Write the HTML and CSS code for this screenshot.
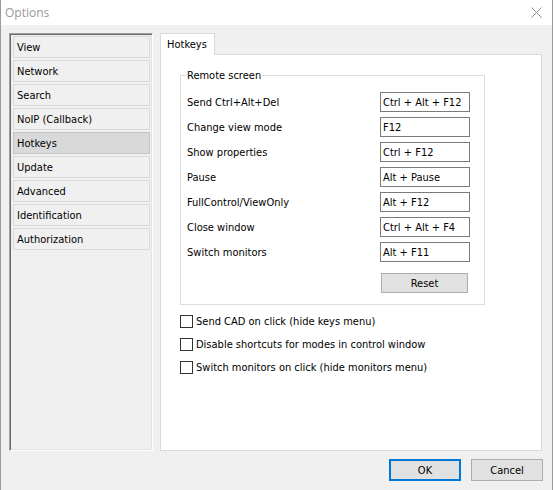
FILE: index.html
```html
<!DOCTYPE html>
<html lang="en">
<head>
    <meta charset="UTF-8">
    <title>Options</title>
    <link rel="stylesheet" href="styles.css">
</head>
<body>
    <div class="window">
        <div class="titlebar">
            <span class="title">Options</span>
            <span class="close">
                <svg width="11" height="11" viewBox="0 0 11 11">
                    <path d="M0.5 0.5 L10.5 10.5 M10.5 0.5 L0.5 10.5" stroke="#8a8a8a" stroke-width="1" fill="none"/>
                </svg>
            </span>
        </div>

        <div class="content">
            <div class="nav">
                <div class="nav-item">View</div>
                <div class="nav-item">Network</div>
                <div class="nav-item">Search</div>
                <div class="nav-item">NoIP (Callback)</div>
                <div class="nav-item active">Hotkeys</div>
                <div class="nav-item">Update</div>
                <div class="nav-item">Advanced</div>
                <div class="nav-item">Identification</div>
                <div class="nav-item">Authorization</div>
            </div>

            <div class="tabs">
                <div class="tab-strip">
                    <div class="tab active">Hotkeys</div>
                </div>
                <div class="tab-panel">
                    <div class="group">
                        <span class="group-title">Remote screen</span>
                        <div class="hk-row">
                            <span>Send Ctrl+Alt+Del</span>
                            <div class="hk-input">Ctrl + Alt + F12</div>
                        </div>
                        <div class="hk-row">
                            <span>Change view mode</span>
                            <div class="hk-input">F12</div>
                        </div>
                        <div class="hk-row">
                            <span>Show properties</span>
                            <div class="hk-input">Ctrl + F12</div>
                        </div>
                        <div class="hk-row">
                            <span>Pause</span>
                            <div class="hk-input">Alt + Pause</div>
                        </div>
                        <div class="hk-row">
                            <span>FullControl/ViewOnly</span>
                            <div class="hk-input">Alt + F12</div>
                        </div>
                        <div class="hk-row">
                            <span>Close window</span>
                            <div class="hk-input">Ctrl + Alt + F4</div>
                        </div>
                        <div class="hk-row">
                            <span>Switch monitors</span>
                            <div class="hk-input">Alt + F11</div>
                        </div>
                        <div class="reset-row">
                            <button class="btn reset-btn">Reset</button>
                        </div>
                    </div>

                    <div class="checks">
                        <label class="check-row"><span class="box"></span>Send CAD on click (hide keys menu)</label>
                        <label class="check-row"><span class="box"></span>Disable shortcuts for modes in control window</label>
                        <label class="check-row"><span class="box"></span>Switch monitors on click (hide monitors menu)</label>
                    </div>
                </div>
            </div>
        </div>

        <div class="footer">
            <button class="btn ok-btn">OK</button>
            <button class="btn">Cancel</button>
        </div>
    </div>
</body>
</html>
```

FILE: styles.css
```css
* {
    margin: 0;
    padding: 0;
    box-sizing: border-box;
}

body {
    font-family: 'DejaVu Sans Condensed', 'Liberation Sans', Arial, sans-serif;
    font-size: 11px;
    color: #000;
    background: #f0f0f0;
}

.window {
    width: 553px;
    height: 490px;
    border-left: 1px solid #9a9a9a;
    border-right: 1px solid #9a9a9a;
    background: #f0f0f0;
    display: flex;
    flex-direction: column;
}

.titlebar {
    height: 25px;
    background: #fff;
    display: flex;
    align-items: center;
    justify-content: space-between;
    padding: 0 10px 0 4px;
}

.title {
    font-family: 'Open Sans', 'Noto Sans', sans-serif;
    font-size: 12px;
    color: #999;
}

.close {
    display: flex;
}

.content {
    display: flex;
    padding: 8px 0 0 8px;
    height: 426px;
}

.nav {
    width: 144px;
    height: 418px;
    border-top: 1px solid #a0a0a0;
    border-left: 1px solid #a0a0a0;
    border-right: 1px solid #fff;
    border-bottom: 1px solid #fff;
    box-shadow: inset 1px 1px 0 #696969, inset -1px -1px 0 #e3e3e3;
    padding: 2px 2px 0 3px;
    display: flex;
    flex-direction: column;
    gap: 2px;
}

.nav-item {
    height: 22px;
    border: 1px solid #d9d9d9;
    background: #f0f0f0;
    padding-left: 3px;
    display: flex;
    align-items: center;
    cursor: pointer;
}

.nav-item.active {
    background: #d9d9d9;
    border-color: #c4c4c4;
}

.tabs {
    margin-left: 7px;
    width: 382px;
    display: flex;
    flex-direction: column;
}

.tab-strip {
    display: flex;
    height: 22px;
    margin-bottom: -1px;
    position: relative;
    z-index: 1;
}

.tab {
    width: 55px;
    height: 22px;
    background: #fff;
    border: 1px solid #d9d9d9;
    border-bottom: none;
    padding-left: 6px;
    display: flex;
    align-items: center;
}

.tab-panel {
    height: 397px;
    background: #fff;
    border: 1px solid #d9d9d9;
    padding: 20px 0 0 19px;
}

.group {
    position: relative;
    width: 305px;
    border: 1px solid #dcdcdc;
    padding: 16px 14px 11px 6px;
    display: flex;
    flex-direction: column;
    gap: 5px;
}

.group-title {
    position: absolute;
    top: -8px;
    left: 6px;
    background: #fff;
    padding-right: 1px;
    line-height: 15px;
}

.hk-row {
    height: 20px;
    display: flex;
    align-items: center;
    justify-content: space-between;
}

.hk-input {
    width: 90px;
    height: 20px;
    border: 1px solid #7a7a7a;
    padding-left: 2px;
    display: flex;
    align-items: center;
}

.reset-row {
    display: flex;
    justify-content: flex-end;
    margin-top: 6px;
    padding-right: 2px;
}

.btn {
    font-family: inherit;
    font-size: 11px;
    color: #000;
    background: #e1e1e1;
    border: 1px solid #adadad;
    width: 72px;
    height: 22px;
    cursor: pointer;
}

.reset-btn {
    width: 87px;
    height: 20px;
}

.ok-btn {
    border: 2px solid #0078d7;
}

.checks {
    margin-top: 5px;
    display: flex;
    flex-direction: column;
}

.check-row {
    height: 23px;
    display: flex;
    align-items: center;
}

.box {
    width: 13px;
    height: 13px;
    border: 1px solid #333;
    background: #fff;
    margin-right: 3px;
}

.footer {
    display: flex;
    justify-content: flex-end;
    gap: 10px;
    padding: 8px 9px 0 0;
}
```
